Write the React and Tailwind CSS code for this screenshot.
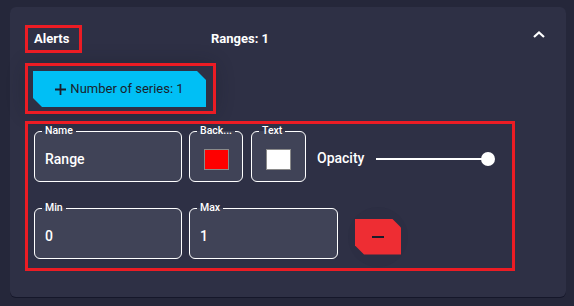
import React from 'react';

const cut = '[clip-path:polygon(0_0,calc(100%-9px)_0,100%_9px,100%_100%,9px_100%,0_calc(100%-9px))]';

function Field({ label, width, children, center }) {
  return (
    <fieldset className={`${width} rounded-[6px] border border-white bg-[#404357]`}>
      <legend className="ml-[7px] px-[3px] text-[10.5px] font-medium leading-[12px] text-white">{label}</legend>
      <div className={`flex h-[44px] items-center ${center ? 'justify-center' : 'px-[10px]'} text-[14px] font-medium text-white`}>
        {children}
      </div>
    </fieldset>
  );
}

function App() {
  return (
    <div className="min-h-screen bg-[#25273a] pl-[10px] pr-[8px] pt-[7px] font-['Roboto',sans-serif]">
      <div className="h-[290px] rounded-[6px] bg-[#2e3045] pl-[15px] pr-[20px] pt-[18px] shadow-[0_1px_0_#15172a]">
        <div className="flex items-center">
          <div className="flex h-[28px] w-[57px] items-center border-[3px] border-[#ec1c24] pl-[6px] text-[13px] font-bold text-white">
            Alerts
          </div>
          <span className="ml-[129px] text-[13px] font-bold text-white">Ranges: 1</span>
          <svg className="ml-auto -mt-[10px]" width="14" height="9" viewBox="0 0 14 9">
            <polyline points="2,7 7,2.5 12,7" fill="none" stroke="white" strokeWidth="2.2" />
          </svg>
        </div>

        <div className="mt-[10px] w-[191px] rounded-[10px] shadow-[0_0_18px_rgba(20,22,38,0.3)]">
          <div className="h-[51px] border-[3px] border-[#ec1c24] pl-[5px] pt-[5px]">
            <button className={`flex h-[36px] w-[173px] items-center justify-center gap-[4px] bg-[#00bff5] text-[13px] text-[#1a1e2c] ${cut}`}>
              <svg width="11" height="11" viewBox="0 0 11 11">
                <path d="M5.5 0v11M0 5.5h11" stroke="#1a1e2c" strokeWidth="1.8" />
              </svg>
              Number of series: 1
            </button>
          </div>
        </div>

        <div className="mt-[7px] h-[150px] w-[490px] border-[3px] border-[#ec1c24] pl-[6px] pt-[1px]">
          <div className="flex items-center">
            <Field label="Name" width="w-[148px]">Range</Field>
            <div className="ml-[7px]">
              <Field label="Back..." width="w-[54px]" center>
                <div className="h-[21px] w-[25px] border border-[#8a8a8a] bg-[#ff0000]" />
              </Field>
            </div>
            <div className="ml-[8px]">
              <Field label="Text" width="w-[55px]" center>
                <div className="h-[21px] w-[25px] border border-[#8a8a8a] bg-white" />
              </Field>
            </div>
            <span className="ml-[11px] mt-[9px] text-[14px] font-medium text-white">Opacity</span>
            <div className="ml-[12px] mt-[10px] flex w-[119px] items-center">
              <div className="h-[2px] flex-1 bg-white" />
              <div className="-ml-[3px] h-[14px] w-[14px] rounded-full bg-white" />
            </div>
          </div>

          <div className="mt-[20px] flex items-center">
            <Field label="Min" width="w-[148px]">0</Field>
            <div className="ml-[7px]">
              <Field label="Max" width="w-[149px]">1</Field>
            </div>
            <div className="-mb-[11px] mt-[1px] ml-[10px] flex h-[60px] w-[60px] items-center justify-center rounded-full bg-[#2c2e43]">
              <button className={`flex h-[36px] w-[46px] items-center justify-center bg-[#ee2d33] ${cut}`}>
                <div className="h-[2px] w-[12px] bg-[#1a1c2a]" />
              </button>
            </div>
          </div>
        </div>
      </div>
    </div>
  );
}

export default App;
